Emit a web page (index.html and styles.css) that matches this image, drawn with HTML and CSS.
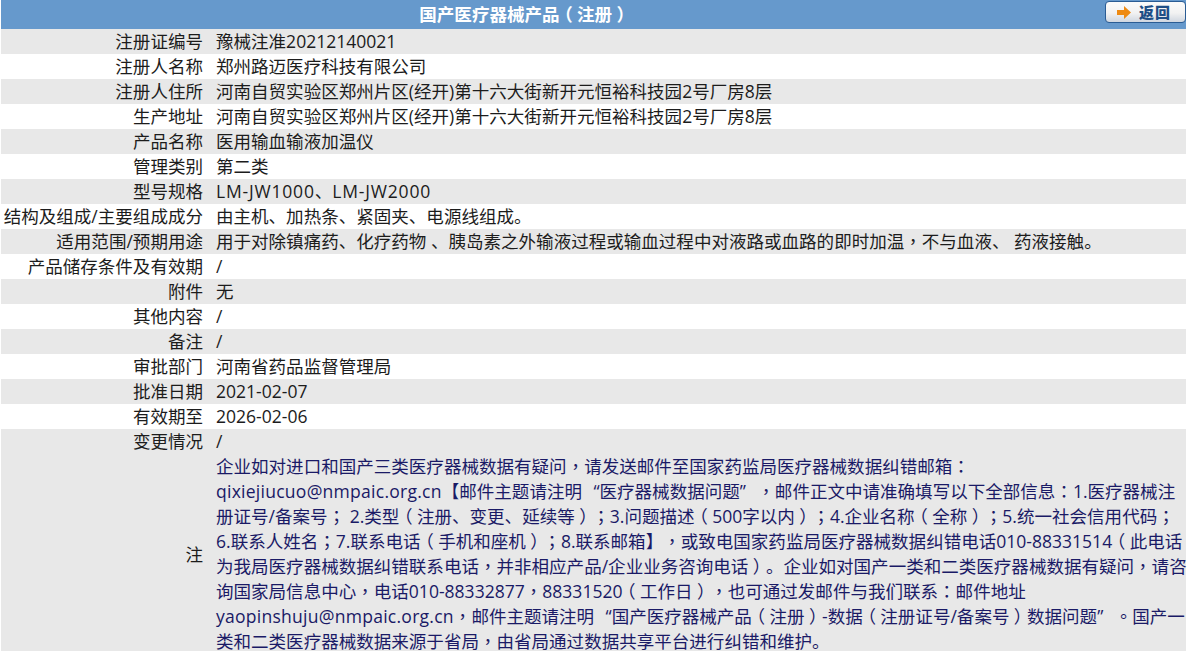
FILE: index.html
```html
<!DOCTYPE html>
<html lang="zh-CN">
<head>
<meta charset="utf-8">
<title>国产医疗器械产品(注册)</title>
<link rel="stylesheet" href="styles.css">
</head>
<body>
<div class="panel">
  <div class="title"><div class="title-text">国产医疗器械产品<span class="pa">（</span>注册<span class="pa">）</span></div>
    <div class="title-side"><a class="back"><svg class="back-arrow" width="14" height="13" viewBox="0 0 14 13"><path d="M0 4h7V0l7 6.500-7 6.500V9H0z" fill="#ee8a12"/></svg><span class="back-text">返回</span></a></div>
  </div>
  <div class="row odd"><div class="k">注册证编号</div><div class="v">豫械注准20212140021</div></div>
  <div class="row"><div class="k">注册人名称</div><div class="v">郑州路迈医疗科技有限公司</div></div>
  <div class="row odd"><div class="k">注册人住所</div><div class="v">河南自贸实验区郑州片区(经开)第十六大街新开元恒裕科技园2号厂房8层</div></div>
  <div class="row"><div class="k">生产地址</div><div class="v">河南自贸实验区郑州片区(经开)第十六大街新开元恒裕科技园2号厂房8层</div></div>
  <div class="row odd"><div class="k">产品名称</div><div class="v">医用输血输液加温仪</div></div>
  <div class="row"><div class="k">管理类别</div><div class="v">第二类</div></div>
  <div class="row odd"><div class="k">型号规格</div><div class="v"><span class="model">LM-JW1000</span>、<span class="model">LM-JW2000</span></div></div>
  <div class="row"><div class="k">结构及组成/主要组成成分</div><div class="v">由主机、加热条、紧固夹、电源线组成。</div></div>
  <div class="row odd"><div class="k">适用范围/预期用途</div><div class="v">用于对除镇痛药、化疗药物 、胰岛素之外输液过程或输血过程中对液路或血路的即时加温<i>，</i>不与血液、 药液接触。</div></div>
  <div class="row"><div class="k">产品储存条件及有效期</div><div class="v">/</div></div>
  <div class="row odd"><div class="k">附件</div><div class="v">无</div></div>
  <div class="row"><div class="k">其他内容</div><div class="v">/</div></div>
  <div class="row odd"><div class="k">备注</div><div class="v">/</div></div>
  <div class="row"><div class="k">审批部门</div><div class="v">河南省药品监督管理局</div></div>
  <div class="row odd"><div class="k">批准日期</div><div class="v">2021-02-07</div></div>
  <div class="row"><div class="k">有效期至</div><div class="v">2026-02-06</div></div>
  <div class="row odd"><div class="k">变更情况</div><div class="v">/</div></div>
  <div class="row odd note"><div class="k">注</div><div class="v">企业如对进口和国产三类医疗器械数据有疑问<i>，</i>请发送邮件至国家药监局医疗器械数据纠错邮箱<i>：</i><br><span class="mail">qixiejiucuo@nmpaic.org.cn</span>【邮件主题请注明<span class="qo">“</span>医疗器械数据问题<span class="qc">”</span><i>，</i>邮件正文中请准确填写以下全部信息<i>：</i>1.医疗器械注<br>册证号/备案号<i>；</i> 2.类型<span class="pa">（</span>注册、变更、延续等<span class="pa">）</span><i>；</i>3.问题描述<span class="pa">（</span>500字以内<span class="pa">）</span><i>；</i>4.企业名称<span class="pa">（</span>全称<span class="pa">）</span><i>；</i>5.统一社会信用代码<i>；</i><br>6.联系人姓名<i>；</i>7.联系电话<span class="pa">（</span>手机和座机<span class="pa">）</span><i>；</i>8.联系邮箱】<i>，</i>或致电国家药监局医疗器械数据纠错电话010-88331514<span class="pa">（</span>此电话<br>为我局医疗器械数据纠错联系电话<i>，</i>并非相应产品/企业业务咨询电话<span class="pa">）</span>。企业如对国产一类和二类医疗器械数据有疑问<i>，</i>请咨<br>询国家局信息中心<i>，</i>电话010-88332877<i>，</i>88331520<span class="pa">（</span>工作日<span class="pa">）</span><i>，</i>也可通过发邮件与我们联系<i>：</i>邮件地址<br><span class="mail">yaopinshuju@nmpaic.org.cn</span><i>，</i>邮件主题请注明<span class="qo">“</span>国产医疗器械产品<span class="pa">（</span>注册<span class="pa">）</span>-数据<span class="pa">（</span>注册证号/备案号<span class="pa">）</span>数据问题<span class="qc">”</span><i>。</i>国产一<br>类和二类医疗器械数据来源于省局<i>，</i>由省局通过数据共享平台进行纠错和维护。</div></div>
</div>
</body>
</html>
```
FILE: styles.css
```css
html, body { margin: 0; padding: 0; background: #fff; }
body { font-family: "Open Sans", "Noto Sans CJK SC", sans-serif; font-size: 17.55px; color: #1c1c1c; overflow: hidden; height: 651px; text-spacing-trim: space-all; }
i { font-style: normal; font-family: "Noto Sans CJK TC", sans-serif; line-height: 1; font-feature-settings: "locl" 0; }
.pa { display: inline-block; width: 1em; text-align: center; line-height: 1; font-family: "Noto Sans CJK SC", sans-serif; font-feature-settings: "halt" 1; }
.qo, .qc { display: inline-block; width: 1em; line-height: 1; }
.qo { text-align: right; }
.qc { text-align: left; }
.panel { margin: 0 3px 0 1px; }
.title { height: 29px; background: #6699cc; display: flex; }
.title-text { flex: 1; text-align: center; color: #fff; font-weight: 700; line-height: 28px; }
.title-side { flex: none; width: 138px; display: flex; justify-content: flex-end; align-items: flex-start; padding-top: 1px; box-sizing: border-box; }
.back { width: 81px; height: 22px; box-sizing: border-box; border: 1px solid #2a5c94; border-radius: 4px; background: linear-gradient(#fbfbfb, #f2f2f2 55%, #cfd6e0); display: flex; align-items: center; padding-left: 11px; }
.back-arrow { flex: none; }
.back-text { margin-left: 8px; font-family: "Noto Sans CJK SC", sans-serif; font-weight: 900; font-size: 15px; letter-spacing: 1px; line-height: 20px; color: #1f4f86; }
.row { display: flex; height: 25px; line-height: 25px; background: #fff; }
.row.odd { background: #e8e8e8; }
.k { flex: none; width: 202px; white-space: nowrap; display: flex; justify-content: flex-end; align-items: center; }
.v { flex: 1; padding-left: 13px; white-space: nowrap; }
.note { height: 200px; }
.note .v { color: #1a1a66; }
.mail { letter-spacing: 0.25px; }
.model { letter-spacing: 0.8px; }
```
